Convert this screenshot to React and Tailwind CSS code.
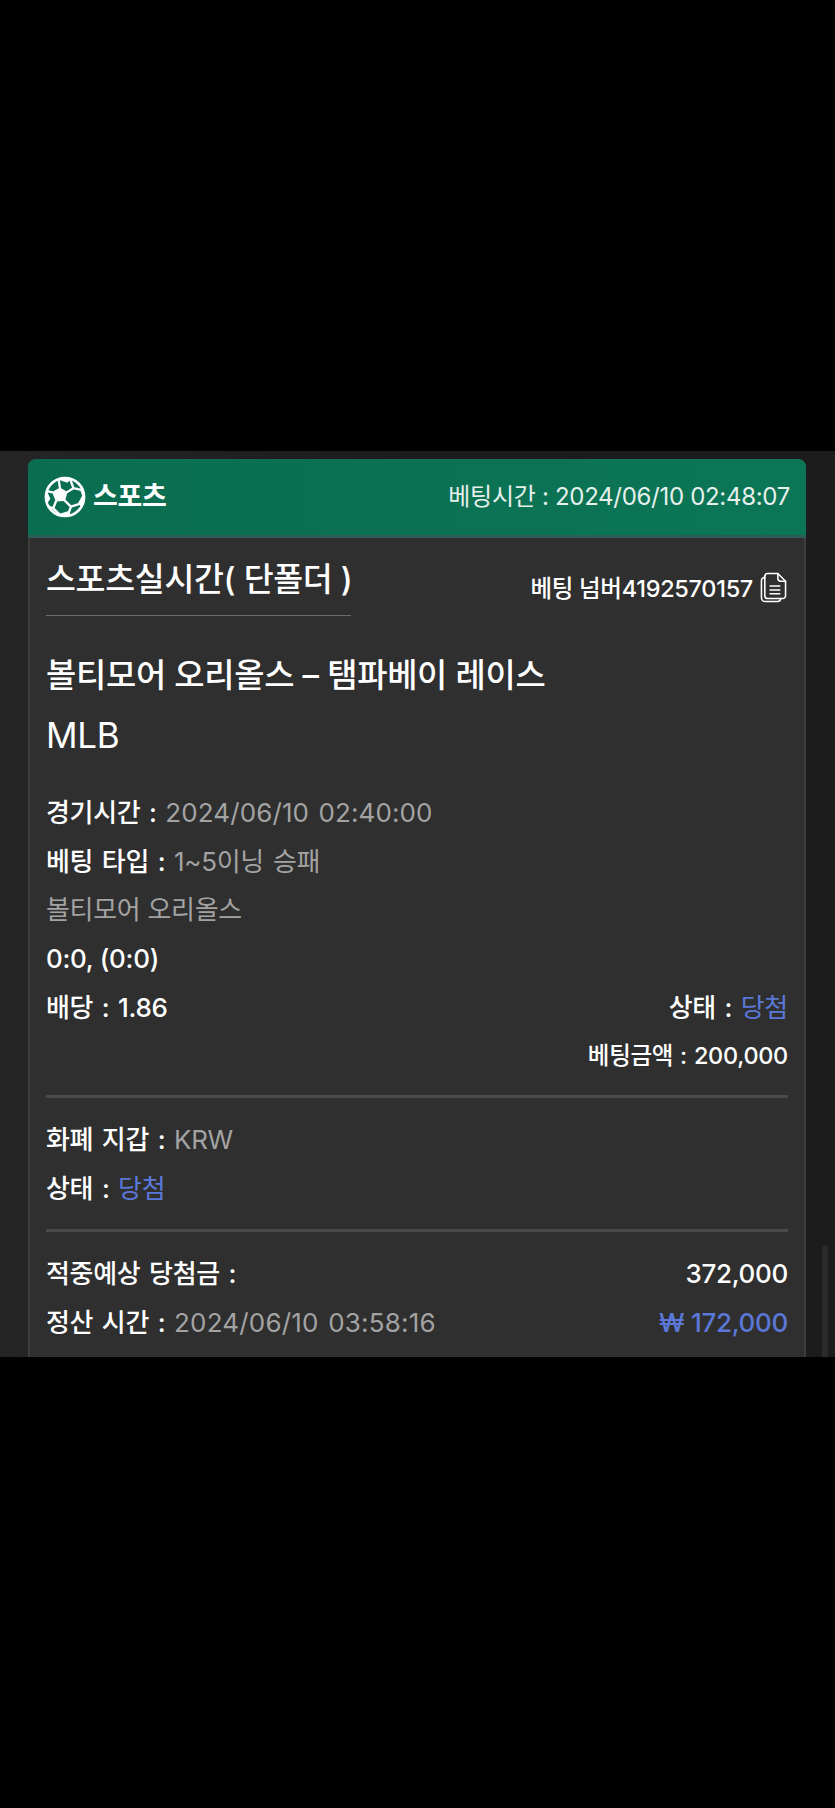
const font = { fontFamily: '"Inter", "Noto Sans CJK KR", sans-serif' };

function BallIcon() {
  return (
    <svg viewBox="0 0 100 100" className="h-[42px] w-[42px]" fill="none" stroke="#fff" strokeWidth="5.5" strokeLinejoin="round">
      <circle cx="50" cy="50" r="45.5" strokeWidth="6" />
      <path d="M21 39l17-10 16 10-5 19-20 1z" fill="#fff" strokeWidth="3" />
      <path d="M38 29L35 9M54 39L70 29l-7-20M70 29l19 4M49 58l15 15 19-6M64 73L57 94M29 59l-7 18 15 14M21 39L6 36M22 77L9 72M89 33l5 14-11 20" />
      <path d="M35 8l14-4 14 5-8 6z" fill="#fff" strokeWidth="2" />
      <path d="M94 47l2 11-6 15-7-6z" fill="#fff" strokeWidth="2" />
      <path d="M6 36l-2 15 4 12 6-9z" fill="#fff" strokeWidth="2" />
      <path d="M37 91l20 4 6-2-6-8z" fill="#fff" strokeWidth="2" />
    </svg>
  );
}

function CopyIcon() {
  return (
    <svg viewBox="0 0 28 32" className="h-[31px] w-[27px]" fill="none" stroke="currentColor" strokeWidth="1.6" strokeLinejoin="round" strokeLinecap="round">
      <path d="M8 1.5h10.5l8 8v15a3 3 0 0 1-3 3H8a3 3 0 0 1-3-3v-20a3 3 0 0 1 3-3z" />
      <path d="M18.5 1.5v5a3 3 0 0 0 3 3h5" />
      <path d="M5 5.5a3.5 3.5 0 0 0-3.5 3.5v17.5a4 4 0 0 0 4 4h12.5a3.5 3.5 0 0 0 3.5-3" />
      <path d="M10.5 14.5h10M10.5 18.5h10M10.5 22.5h10" />
    </svg>
  );
}

function Row({ label, value, valueClass = 'text-[#a3a3a3]' }) {
  return (
    <div className="flex h-[48.7px] items-center whitespace-pre [word-spacing:2px]">
      <span className="font-medium text-white">{label} : </span>
      <span className={valueClass}>{value}</span>
    </div>
  );
}

export default function App() {
  return (
    <div className="h-[1808px] w-[835px] overflow-hidden bg-black text-[26px] tracking-[-0.3px]" style={font}>
      <div className="relative mt-[451px] h-[906px] overflow-hidden bg-gradient-to-r from-[#252525] via-[#1c1c1c] to-[#1c1c1c] px-[28px] pt-[8px]">
        <div className="h-[950px] w-[778px] rounded-t-[8px] border-x-2 border-[#3d3d3d] bg-[#2f2f2f]">
          <div className="-mx-[2px] flex h-[79px] items-center justify-between rounded-t-[8px] border-b-[3px] border-[#2c5c58] bg-gradient-to-r from-[#0b6d50] to-[#0b7656] pl-[16px] pr-[16px]">
            <div className="flex items-center gap-[7px] text-[27px] font-semibold text-white">
              <BallIcon />
              <span>스포츠</span>
            </div>
            <span className="text-[24px] text-[#e6f0ec]">베팅시간 : 2024/06/10 02:48:07</span>
          </div>
          <div className="px-[16px]">
            <div className="flex items-start justify-between pt-[20px]">
              <div className="w-[305px] whitespace-pre border-b border-[#6b6b6b] pb-[13px] text-[32.5px] font-medium leading-[44px] text-white">스포츠실시간( 단폴더 )</div>
              <div className="flex items-center gap-[7px] pt-[11px] pr-[1px] text-[23.5px] font-medium text-white">
                <span className="pt-[2px]">베팅 넘버4192570157</span>
                <CopyIcon />
              </div>
            </div>
            <div className="pt-[29px] text-[32.9px] font-medium leading-[60px] text-white">
              <div>볼티모어 오리올스 – 탬파베이 레이스</div>
              <div className="text-[35px] font-normal">MLB</div>
            </div>
            <div className="pt-[23px]">
              <Row label="경기시간" value="2024/06/10 02:40:00" valueClass="text-[#a3a3a3] tracking-[0.1px]" />
              <Row label="베팅 타입" value="1~5이닝 승패" />
              <div className="flex h-[48.7px] items-center text-[#a3a3a3]">볼티모어 오리올스</div>
              <div className="flex h-[48.7px] items-center pt-[1px] font-medium text-white">0:0, (0:0)</div>
              <div className="flex h-[48.7px] items-center justify-between whitespace-pre pt-[1px] font-medium text-white [word-spacing:2px]">
                <span>배당 : 1.86</span>
                <span>상태 : <span className="font-normal text-[#5b78d8]">당첨</span></span>
              </div>
              <div className="flex h-[48.7px] items-center justify-end text-[23.5px] font-medium text-white [word-spacing:1px]">베팅금액 : 200,000</div>
            </div>
            <div className="mt-[15px] h-[3px] bg-[#4a4a4a]" />
            <div className="pt-[17px]">
              <Row label="화폐 지갑" value="KRW" />
              <Row label="상태" value="당첨" valueClass="text-[#5b78d8]" />
            </div>
            <div className="mt-[16px] h-[3px] bg-[#4a4a4a]" />
            <div className="pt-[17px]">
              <div className="flex h-[50px] items-center justify-between font-medium text-white [word-spacing:2px]">
                <span>적중예상 당첨금 :</span>
                <span>372,000</span>
              </div>
              <div className="flex h-[48.7px] items-center justify-between whitespace-pre [word-spacing:2px]">
                <span className="font-medium text-white">정산 시간 : <span className="font-normal tracking-[0.2px] text-[#a3a3a3]">2024/06/10 03:58:16</span></span>
                <span className="font-medium text-[#5b78d8] [word-spacing:0px]">₩ 172,000</span>
              </div>
            </div>
          </div>
        </div>
        <div className="absolute bottom-0 right-[7px] h-[112px] w-[6px] rounded-t-full bg-[#2a2a2a]" />
      </div>
    </div>
  );
}
